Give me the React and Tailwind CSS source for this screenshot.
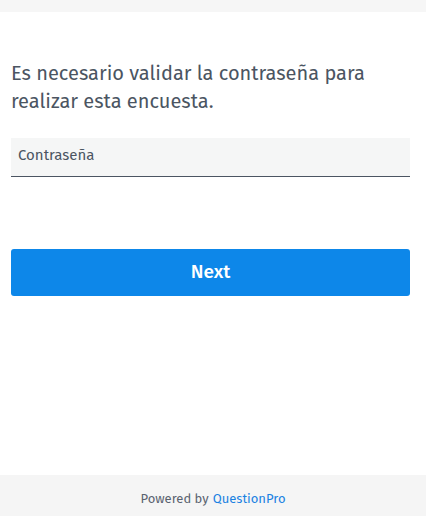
export default function App() {
  return (
    <div className="flex h-[516px] w-full flex-col bg-white font-['Fira_Sans','Open_Sans',sans-serif]">
      <div className="h-[12px] bg-[#f6f6f6]" />
      <main className="flex-1 pl-[11px] pr-[16px] pt-[47px]">
        <p className="text-[20px] leading-[28px] text-[#4b5562]">
          Es necesario validar la contraseña para realizar esta encuesta.
        </p>
        <div className="mt-[23px]">
          <input
            type="password"
            placeholder="Contraseña"
            className="h-[39px] w-full border-b border-[#4b5562] bg-[#f5f6f6] px-[7px] pb-[5px] text-[15px] text-[#4b5562] placeholder-[#4b5562] outline-none"
          />
        </div>
        <button className="mt-[72px] h-[47px] w-full rounded-[3px] bg-[#0d87e9] text-[19px] font-medium text-white">
          Next
        </button>
      </main>
      <footer className="flex h-[41px] items-center justify-center bg-[#f5f5f5] pt-[7px] text-[13px] text-[#5a6370]">
        Powered by <span className="ml-1 text-[#1a82e2]">QuestionPro</span>
      </footer>
    </div>
  )
}
